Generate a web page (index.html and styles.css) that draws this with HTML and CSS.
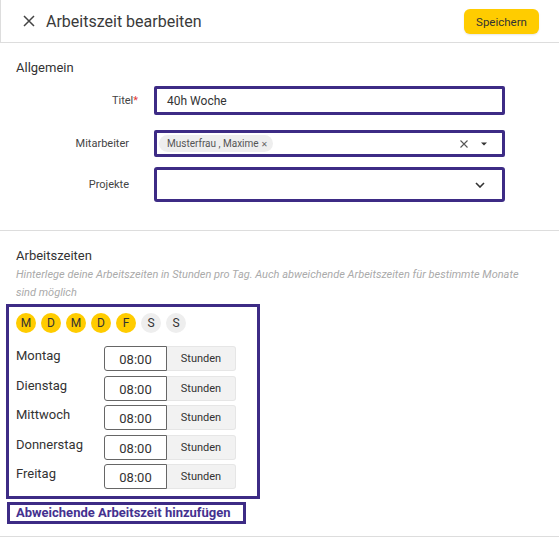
FILE: index.html
```html
<!DOCTYPE html>
<html lang="de">
<head>
    <meta charset="UTF-8">
    <meta name="viewport" content="width=device-width, initial-scale=1.0">
    <title>Arbeitszeit bearbeiten</title>
    <link rel="stylesheet" href="styles.css">
</head>
<body>
    <div class="header">
        <div class="header-title">
            <svg class="close-icon" width="14" height="14" viewBox="0 0 14 14">
                <path d="M2 2 L12 12 M12 2 L2 12" stroke="#444" stroke-width="1.5" fill="none"/>
            </svg>
            <span>Arbeitszeit bearbeiten</span>
        </div>
        <button class="save-btn">Speichern</button>
    </div>

    <div class="section general">
        <h3>Allgemein</h3>
        <div class="form-row row-title">
            <label class="label label-req">Titel<span class="req">*</span></label>
            <div class="field field-title">40h Woche</div>
        </div>
        <div class="form-row row-tags">
            <label class="label">Mitarbeiter</label>
            <div class="field field-tags">
                <span class="chip">Musterfrau , Maxime <span class="chip-x">&#x2715;</span></span>
                <span class="tag-actions">
                    <svg width="8" height="8" viewBox="0 0 8 8"><path d="M0.5 0.5 L7.5 7.5 M7.5 0.5 L0.5 7.5" stroke="#555" stroke-width="1.1"/></svg>
                    <svg width="6" height="4" viewBox="0 0 6 4"><path d="M0 0.5 L6 0.5 L3 3.5 Z" fill="#333"/></svg>
                </span>
            </div>
        </div>
        <div class="form-row">
            <label class="label">Projekte</label>
            <div class="field field-select">
                <svg width="10" height="6" viewBox="0 0 10 6"><path d="M1 1 L5 5 L9 1" stroke="#333" stroke-width="1.6" fill="none"/></svg>
            </div>
        </div>
    </div>

    <div class="section hours">
        <h3>Arbeitszeiten</h3>
        <p class="hint">Hinterlege deine Arbeitszeiten in Stunden pro Tag. Auch abweichende Arbeitszeiten für bestimmte Monate sind möglich</p>
        <div class="hours-box">
            <div class="days">
                <span class="day on">M</span>
                <span class="day on">D</span>
                <span class="day on">M</span>
                <span class="day on">D</span>
                <span class="day on">F</span>
                <span class="day">S</span>
                <span class="day">S</span>
            </div>
            <div class="hour-row"><span class="day-name">Montag</span><span class="time">08:00</span><span class="unit">Stunden</span></div>
            <div class="hour-row"><span class="day-name">Dienstag</span><span class="time">08:00</span><span class="unit">Stunden</span></div>
            <div class="hour-row"><span class="day-name">Mittwoch</span><span class="time">08:00</span><span class="unit">Stunden</span></div>
            <div class="hour-row"><span class="day-name">Donnerstag</span><span class="time">08:00</span><span class="unit">Stunden</span></div>
            <div class="hour-row"><span class="day-name">Freitag</span><span class="time">08:00</span><span class="unit">Stunden</span></div>
        </div>
        <a class="add-link">Abweichende Arbeitszeit hinzufügen</a>
    </div>
</body>
</html>
```

FILE: styles.css
```css
body {
    margin: 0;
    font-family: Roboto, "Liberation Sans", sans-serif;
    color: #333;
    background: #fff;
}
.header {
    height: 42px;
    display: flex;
    align-items: center;
    justify-content: space-between;
    border-bottom: 1px solid #ddd;
    border-left: 1px solid #ddd;
    padding: 0 20px 0 21px;
}
.header-title {
    display: flex;
    align-items: center;
    gap: 10px;
    font-size: 16px;
    color: #3a3a3a;
}
.save-btn {
    background: #ffcc00;
    border: none;
    border-radius: 6px;
    height: 25px;
    width: 75px;
    font-family: inherit;
    font-size: 11.5px;
    color: #333;
    padding: 0;
    margin-top: 1px;
    box-shadow: 0 1px 2px rgba(0, 0, 0, 0.1);
}
.section {
    border-bottom: 1px solid #ddd;
    padding: 0 0 0 16px;
}
.section h3 {
    font-size: 13px;
    font-weight: normal;
    margin: 0;
    color: #333;
}
.general {
    padding-top: 17px;
    height: 170px;
}
.general h3 {
    margin-bottom: 11px;
}
.form-row {
    display: flex;
    align-items: center;
    margin-bottom: 10px;
}
.row-title {
    margin-bottom: 15px;
}
.label {
    width: 113px;
    flex-shrink: 0;
    text-align: right;
    font-size: 11px;
    color: #444;
    margin-right: 25px;
}
.label-req {
    width: 122px;
    margin-right: 16px;
}
.req {
    color: #e53935;
}
.field {
    flex-shrink: 0;
    border: 3px solid #3d2b85;
    border-radius: 2px;
    box-sizing: border-box;
    width: 351px;
    display: flex;
    align-items: center;
    font-size: 12px;
}
.field-title {
    height: 29px;
    padding-left: 10px;
}
.field-tags {
    height: 27px;
    padding: 0 15px 0 2px;
    justify-content: space-between;
}
.chip {
    background: #eee;
    border-radius: 10px;
    font-size: 10px;
    color: #555;
    padding: 3px 5px 3px 8px;
}
.chip-x {
    font-size: 8px;
    color: #666;
}
.tag-actions {
    display: flex;
    align-items: center;
    gap: 13px;
}
.field-select {
    height: 35px;
    justify-content: flex-end;
    padding-right: 17px;
    border-radius: 3px;
}
.hours {
    padding-top: 17px;
    padding-bottom: 12px;
}
.hint {
    font-size: 11px;
    font-style: italic;
    color: #aaa;
    line-height: 18px;
    margin: 3px 0 2px;
    max-width: 520px;
}
.hours-box {
    border: 3px solid #3d2b85;
    width: 241px;
    margin-left: -10px;
    padding: 6px 0 7px 7px;
}
.days {
    display: flex;
    gap: 5px;
    margin-bottom: 13px;
}
.day {
    width: 20px;
    height: 20px;
    border-radius: 50%;
    background: #eee;
    display: flex;
    align-items: center;
    justify-content: center;
    font-size: 12px;
    color: #333;
}
.day.on {
    background: #ffcc00;
}
.hour-row {
    display: flex;
    height: 25px;
    margin-bottom: 4.5px;
}
.hour-row:last-child {
    margin-bottom: 0;
}
.day-name {
    width: 88px;
    font-size: 13px;
    color: #333;
    margin-top: 2px;
}
.time {
    width: 63px;
    box-sizing: border-box;
    border: 1px solid #666;
    border-radius: 3px 0 0 3px;
    font-size: 13px;
    display: flex;
    align-items: center;
    justify-content: center;
    padding-top: 2px;
}
.unit {
    width: 69px;
    box-sizing: border-box;
    background: #f2f2f2;
    border: 1px solid #e6e6e6;
    border-left: none;
    border-radius: 0 3px 3px 0;
    font-size: 11px;
    display: flex;
    align-items: center;
    justify-content: center;
}
.add-link {
    display: inline-block;
    margin: 3px 0 0 -9px;
    border: 3px solid #3d2b85;
    padding: 0 12px 0 6px;
    height: 16px;
    line-height: 16px;
    font-size: 13px;
    font-weight: bold;
    color: #44318f;
}
```
